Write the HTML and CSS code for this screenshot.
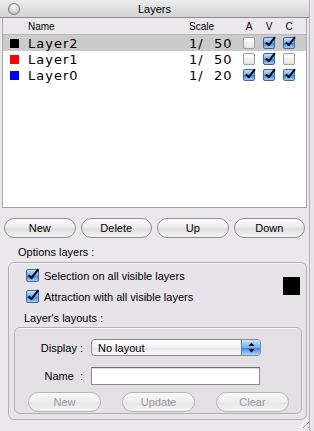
FILE: index.html
```html
<!DOCTYPE html>
<html lang="en">
<head>
    <meta charset="UTF-8">
    <title>Layers</title>
    <link rel="stylesheet" href="styles.css">
</head>
<body>
<div class="window">
    <div class="titlebar">
        <span class="close"></span>
        <span class="title">Layers</span>
    </div>

    <div class="list">
        <div class="row head">
            <span></span>
            <span>Name</span>
            <span>Scale</span>
            <span class="col">A</span>
            <span class="col">V</span>
            <span class="col">C</span>
        </div>
        <div class="rows">
            <div class="row sel">
                <span class="swatch black"></span>
                <span class="name">Layer2</span>
                <span class="scale">1/  50</span>
                <span class="cb"></span>
                <span class="cb on"></span>
                <span class="cb on"></span>
            </div>
            <div class="row">
                <span class="swatch red"></span>
                <span class="name">Layer1</span>
                <span class="scale">1/  50</span>
                <span class="cb"></span>
                <span class="cb on"></span>
                <span class="cb"></span>
            </div>
            <div class="row">
                <span class="swatch blue"></span>
                <span class="name">Layer0</span>
                <span class="scale">1/  20</span>
                <span class="cb on"></span>
                <span class="cb on"></span>
                <span class="cb on"></span>
            </div>
        </div>
    </div>

    <div class="buttons">
        <button class="btn">New</button>
        <button class="btn">Delete</button>
        <button class="btn">Up</button>
        <button class="btn">Down</button>
    </div>

    <div class="caption">Options layers :</div>
    <div class="group">
        <div class="opts">
            <div class="opt-list">
                <label class="opt"><span class="cb big on"></span>Selection on all visible layers</label>
                <label class="opt"><span class="cb big on"></span>Attraction with all visible layers</label>
            </div>
            <span class="color-box"></span>
        </div>

        <div class="caption sub">Layer's layouts :</div>
        <div class="group inner">
            <div class="form">
                <span class="lbl">Display :</span>
                <div class="popup">
                    <span>No layout</span>
                    <span class="stepper">
                        <svg width="7" height="11" viewBox="0 0 7 11">
                            <path d="M3.5 0.5 L6.5 4 L0.5 4 Z" fill="#000"/>
                            <path d="M3.5 10.5 L6.5 7 L0.5 7 Z" fill="#000"/>
                        </svg>
                    </span>
                </div>
                <span class="lbl">Name&nbsp; :</span>
                <div class="field"></div>
            </div>
            <div class="buttons small">
                <button class="btn" disabled>New</button>
                <button class="btn" disabled>Update</button>
                <button class="btn" disabled>Clear</button>
            </div>
        </div>
    </div>

    <span class="grip"></span>
</div>
</body>
</html>
```

FILE: styles.css
```css
body {
    margin: 0;
    background: #e9e6ea;
}
.window {
    position: relative;
    width: 309px;
    height: 431px;
    border-right: 1px solid #b3afb3;
    background: #ebe8ec;
    font-family: "Liberation Sans", Arial, sans-serif;
    font-size: 11px;
    color: #000;
    overflow: hidden;
}

/* title bar */
.titlebar {
    display: flex;
    align-items: center;
    height: 17px;
    border-bottom: 1px solid #8c8c8c;
    background: linear-gradient(#ececec, #d2d2d2);
}
.close {
    width: 10px;
    height: 10px;
    margin-left: 8px;
    border: 1px solid #7a7a7a;
    border-radius: 50%;
    background: radial-gradient(circle at 50% 30%, #ffffff, #d0d0d0 60%, #b8b8b8);
}
.title {
    flex: 1;
    margin-right: 20px;
    text-align: center;
}

/* layer list */
.list {
    margin-left: 2px;
    width: 303px;
    border-left: 1px solid #a9a5a9;
    border-right: 1px solid #a9a5a9;
    border-bottom: 1px solid #a0a0a0;
}
.row {
    display: grid;
    grid-template-columns: 18px 161px 54px 20px 20px 20px;
    align-items: center;
    height: 16px;
    padding-left: 7px;
}
.row.head {
    border-bottom: 1px solid #b8b8b8;
    background: #ebe8ec;
    font-size: 10px;
    height: 16px;
}
.row.head .col {
    width: 12px;
    text-align: center;
}
.rows {
    height: 172px;
    background: #fff;
}
.row.sel {
    background: #cbcbcb;
}
.name, .scale {
    font-family: "DejaVu Sans", sans-serif;
    font-size: 13px;
    letter-spacing: 1px;
    white-space: pre;
}
.swatch {
    width: 9px;
    height: 9px;
}
.black { background: #000; }
.red { background: #ff0000; }
.blue { background: #0000ff; }

/* checkboxes */
.cb {
    position: relative;
    box-sizing: border-box;
    width: 12px;
    height: 12px;
    border: 1px solid #9c9c9c;
    border-radius: 2px;
    background: linear-gradient(#ffffff, #e4e4e4);
}
.cb.on {
    border-color: #3a68a8;
    background: linear-gradient(#c7e2ff, #6aaaf0 50%, #3d88e0 55%, #9dd0ff);
}
.cb.on::after {
    content: '';
    position: absolute;
    left: 4px;
    top: -3px;
    width: 3px;
    height: 9px;
    border: solid #000;
    border-width: 0 2px 2px 0;
    transform: rotate(38deg);
}
.cb.big {
    width: 13px;
    height: 13px;
    margin-right: 5px;
}
.cb.big::after {
    left: 4px;
    top: -3px;
    height: 10px;
}

/* buttons */
.buttons {
    display: flex;
    gap: 5px;
    margin-top: 10px;
    padding: 0 4px;
}
.btn {
    flex: 1;
    height: 20px;
    padding: 0;
    border: 1px solid #8e8e8e;
    border-radius: 10px;
    background: linear-gradient(#fdfdfd, #ececec 45%, #dedede 55%, #f6f6f6);
    font-family: "Liberation Sans", Arial, sans-serif;
    font-size: 11px;
    color: #000;
}
.btn:disabled {
    border-color: #b6b4b6;
    background: linear-gradient(#f8f8f8, #eeeeee 50%, #e6e6e6 55%, #f4f4f4);
    color: #9a9a9a;
}
.buttons.small {
    gap: 21px;
    margin-top: 7px;
    padding: 0 0 0 13px;
}
.buttons.small .btn {
    flex: none;
    width: 73px;
}

/* options */
.caption {
    margin-top: 8px;
    padding-left: 18px;
    line-height: 13px;
}
.caption.sub {
    margin-top: 9px;
    padding-left: 15px;
}
.group {
    margin: 3px 0 0 8px;
    width: 297px;
    height: 156px;
    border: 1px solid #b3afb3;
    border-radius: 6px;
    background: #e7e3e8;
    box-shadow: inset 0 1px 0 #f6f4f6;
}
.group.inner {
    margin: 2px 0 0 5px;
    width: 286px;
    height: 85px;
    background: #e3dfe4;
}
.opts {
    display: flex;
    align-items: center;
    justify-content: space-between;
    padding: 6px 6px 0 17px;
}
.opt-list {
    display: flex;
    flex-direction: column;
    gap: 8px;
}
.opt {
    display: flex;
    align-items: center;
    height: 13px;
}
.color-box {
    width: 17px;
    height: 18px;
    background: #000;
}

/* layouts form */
.form {
    display: grid;
    grid-template-columns: 75px 170px;
    column-gap: 1px;
    row-gap: 11px;
    align-items: center;
    padding-top: 11px;
}
.lbl {
    padding-right: 7px;
    text-align: right;
}
.popup {
    display: flex;
    align-items: center;
    justify-content: space-between;
    height: 15px;
    padding-left: 6px;
    border: 1px solid #8a8a8a;
    border-radius: 4px;
    background: linear-gradient(#ffffff, #f0f0f0 50%, #e6e6e6 55%, #fafafa);
    overflow: hidden;
}
.stepper {
    display: flex;
    align-items: center;
    justify-content: center;
    width: 18px;
    height: 15px;
    border-left: 1px solid #5a7fb0;
    background: linear-gradient(#cfe6ff, #6fb0f2 50%, #3f8ae0 55%, #a5d4ff);
}
.field {
    width: 167px;
    height: 16px;
    border: 1px solid #8c8c8c;
    border-top-color: #6f6f6f;
    background: #fff;
    box-shadow: inset 0 1px 1px rgba(0, 0, 0, 0.15);
}

.grip {
    position: absolute;
    right: 0;
    bottom: 3px;
    width: 11px;
    height: 10px;
    background: repeating-linear-gradient(135deg, transparent 0 2px, #9a9a9a 2px 3px, #fff 3px 4px);
    clip-path: polygon(100% 0, 100% 100%, 0 100%);
}
```
